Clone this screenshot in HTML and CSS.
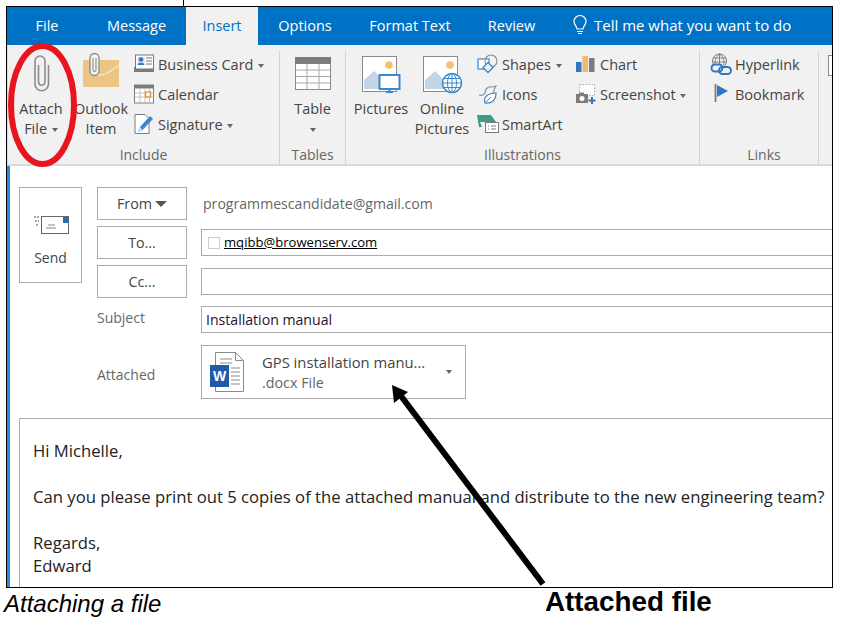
FILE: index.html
```html
<!DOCTYPE html>
<html lang="en">
<head>
<meta charset="utf-8">
<title>Attaching a file</title>
<link rel="stylesheet" href="styles.css">
</head>
<body>
<div class="page">
  <div class="tick"></div>
  <div class="frame">
    <nav class="tabs">
      <div class="tab t-file">File</div>
      <div class="tab t-message">Message</div>
      <div class="tab active">Insert</div>
      <div class="tab t-options">Options</div>
      <div class="tab t-format">Format Text</div>
      <div class="tab t-review">Review</div>
      <div class="tell">
        <svg class="bulb" width="16" height="20" viewBox="0 0 16 20"><path d="M5 14c0-3-3-4-3-7.500a6 6 0 0 1 12 0C14 10 11 11 11 14z" fill="none" stroke="#fff" stroke-width="1.200"/><path d="M5 16.500h6M6 18.500h4" stroke="#fff" stroke-width="1.200"/></svg>
        <span>Tell me what you want to do</span>
      </div>
    </nav>
    <section class="ribbon">
      <div class="group g-include">
        <div class="items">
          <div class="large w-attach">
            <svg class="licon" width="40" height="42" viewBox="0 0 40 42"><path d="M27.500 12V31a6.750 6.750 0 0 1-13.500 0V8a5 5 0 0 1 10 0V29a3.250 3.250 0 0 1-6.500 0V12" fill="none" stroke="#8c8c8c" stroke-width="1.600"/></svg>
            <span>Attach</span><span>File <i class="caret"></i></span>
          </div>
          <div class="large w-outlook">
            <svg class="licon" width="40" height="42" viewBox="0 0 40 42"><path d="M2 7h36v27H2z" fill="#ecc583"/><path d="M15 22c8 2 17-5 23-10" fill="none" stroke="#f7e7c8" stroke-width="1.400"/><path d="M9 5a4.500 4.500 0 0 1 9 0v13a4.500 4.500 0 0 1-9 0z" fill="#f4f4f4" stroke="#8c8c8c" stroke-width="1.300"/><path d="M12 5v12a1.500 1.500 0 0 0 3 0V5" fill="none" stroke="#8c8c8c" stroke-width="1.100"/></svg>
            <span>Outlook</span><span>Item</span>
          </div>
          <div class="smalls">
            <div class="small">
              <svg width="22" height="20" viewBox="0 0 22 20"><rect x="1" y="13" width="20" height="5" fill="#7c7c7c"/><rect x="2.500" y="1" width="18" height="14" fill="#fff" stroke="#777"/><rect x="4.500" y="3" width="7" height="8" fill="#cfe0f2"/><circle cx="8" cy="5.500" r="2.200" fill="#2f78c4"/><path d="M4.500 11c.5-3 6.500-3 7 0z" fill="#2f78c4"/><path d="M13 4h6M13 7h6M13 10h6" stroke="#777"/></svg>
              <span>Business Card <i class="caret"></i></span>
            </div>
            <div class="small">
              <svg width="22" height="20" viewBox="0 0 22 20"><rect x="1.500" y="1" width="19" height="18" fill="#fff" stroke="#7c7c7c"/><rect x="1.500" y="1" width="19" height="3.500" fill="#7c7c7c"/><path d="M2 9h19M2 13h19M7 5v14M12 5v14M16.500 5v14" stroke="#b5b5b5" stroke-width=".8"/><rect x="12.500" y="8" width="5" height="5" fill="#fff" stroke="#e58a2c" stroke-width="1.300"/></svg>
              <span>Calendar</span>
            </div>
            <div class="small">
              <svg width="22" height="22" viewBox="0 0 22 22"><path d="M2 1.500h10l4 4V20.500H2z" fill="#fff" stroke="#7c7c7c"/><path d="M5 19l2-5L17 3l3 3L9.500 17z" fill="#3b86cf"/><path d="M5 19l2-5 2.500 3z" fill="#c9ddf1"/></svg>
              <span>Signature <i class="caret"></i></span>
            </div>
          </div>
        </div>
        <div class="label">Include</div>
      </div>
      <div class="group g-tables">
        <div class="items">
          <div class="large w-table">
            <svg class="licon" width="38" height="42" viewBox="0 0 38 42"><rect x="1.500" y="4.500" width="35" height="32" fill="#fff" stroke="#8a8a8a"/><rect x="1" y="4" width="36" height="7" fill="#7c7c7c"/><path d="M2 17h34M2 23.500h34M2 30h34M13 11v25M25 11v25" stroke="#a8a8a8"/></svg>
            <span>Table</span><span><i class="caret"></i></span>
          </div>
        </div>
        <div class="label">Tables</div>
      </div>
      <div class="group g-illus">
        <div class="items">
          <div class="large w-pic">
            <svg class="licon" width="44" height="42" viewBox="0 0 44 42"><rect x="3.500" y="3.500" width="34" height="35" fill="#fff" stroke="#8a8a8a"/><circle cx="30" cy="12" r="3.800" fill="#f0c36d"/><path d="M5 36V27l10-9 12 12v6z" fill="#c2d4e8"/><rect x="20.500" y="22" width="20" height="14" fill="#fff" stroke="#3c86cc" stroke-width="2"/><path d="M27 39h7M30.500 36v3" stroke="#3c86cc" stroke-width="2"/></svg>
            <span>Pictures</span>
          </div>
          <div class="large w-online">
            <svg class="licon" width="44" height="42" viewBox="0 0 44 42"><rect x="3.500" y="3.500" width="34" height="35" fill="#fff" stroke="#8a8a8a"/><circle cx="30" cy="12" r="3.800" fill="#f0c36d"/><path d="M5 36V27l10-9 12 12v6z" fill="#c2d4e8"/><circle cx="32" cy="30" r="9.500" fill="#fff" stroke="#3c86cc" stroke-width="1.500"/><path d="M22.500 30h19M23.500 25.500h17M23.500 34.500h17M32 20.500v19" stroke="#3c86cc"/><ellipse cx="32" cy="30" rx="4.500" ry="9.500" fill="none" stroke="#3c86cc"/></svg>
            <span>Online</span><span>Pictures</span>
          </div>
          <div class="smalls s-draw">
            <div class="small">
              <svg width="22" height="20" viewBox="0 0 22 20"><rect x="1" y="5" width="11" height="10" fill="#fff" stroke="#3c86cc" stroke-width="1.200"/><circle cx="14" cy="7" r="6" fill="none" stroke="#8c8c8c" stroke-width="1.100"/><path d="M11 9.500l5 5-5 5-5-5z" transform="translate(0 -1)" fill="#f1f1f1" stroke="#3c86cc" stroke-width="1.300"/></svg>
              <span>Shapes <i class="caret"></i></span>
            </div>
            <div class="small">
              <svg width="22" height="22" viewBox="0 0 22 22"><path d="M2 12c3 1 5 0 6-2 0-5 4-7 8-6l3-1-2 4c0 3-2 5-4 6" fill="none" stroke="#8c8c8c" stroke-width="1.100"/><path d="M8 20c-2-6 3-10 11-10 0 7-4 11-11 10z" fill="#fff" stroke="#3c86cc" stroke-width="1.200"/><path d="M8 20l6-6" stroke="#3c86cc"/></svg>
              <span>Icons</span>
            </div>
            <div class="small">
              <svg width="22" height="22" viewBox="0 0 22 22"><path d="M0 2h14l5 7H3l2 5H2z" fill="#3f9a83"/><rect x="8.500" y="9.500" width="13" height="10" fill="#fff" stroke="#7c7c7c"/><path d="M11 13h1M14 13h5M11 16h1M14 16h5" stroke="#7c7c7c"/></svg>
              <span>SmartArt</span>
            </div>
          </div>
          <div class="smalls s-chart">
            <div class="small">
              <svg width="22" height="20" viewBox="0 0 22 20"><rect x="1" y="8" width="5.500" height="10" fill="#2f78c4"/><rect x="7.500" y="2" width="5.500" height="16" fill="#eebd6b"/><rect x="14" y="4" width="5.500" height="14" fill="#7c7c7c"/></svg>
              <span>Chart</span>
            </div>
            <div class="small">
              <svg width="22" height="22" viewBox="0 0 22 22"><rect x="4.500" y="1.500" width="15" height="11" fill="#fff" stroke="#aaa" stroke-dasharray="1.500 1.500"/><rect x="1" y="11" width="12" height="9" fill="#7c7c7c"/><rect x="4" y="9.500" width="5" height="2" fill="#7c7c7c"/><circle cx="7" cy="15.500" r="2.500" fill="#fff"/><path d="M17 14v7M13.500 17.500h7" stroke="#2f78c4" stroke-width="2"/></svg>
              <span>Screenshot <i class="caret"></i></span>
            </div>
          </div>
        </div>
        <div class="label">Illustrations</div>
      </div>
      <div class="group g-links">
        <div class="items">
          <div class="smalls">
            <div class="small">
              <svg width="22" height="22" viewBox="0 0 22 22"><circle cx="9.500" cy="8" r="7" fill="none" stroke="#7c7c7c"/><path d="M3 5h13M2.500 9h14M9.500 1v12M5.500 12c-1-4 0-8 4-11 4 3 5 7 4 11" fill="none" stroke="#7c7c7c" stroke-width=".9"/><rect x="1.500" y="11.500" width="11" height="7" rx="3.500" fill="#f1f1f1" stroke="#2f78c4" stroke-width="2"/><rect x="9" y="14" width="12" height="7" rx="3.500" fill="none" stroke="#2f78c4" stroke-width="2"/></svg>
              <span>Hyperlink</span>
            </div>
            <div class="small">
              <svg width="22" height="20" viewBox="0 0 22 20"><path d="M5.500 0v18" stroke="#7c7c7c" stroke-width="1.800"/><path d="M7 1l11 6-11 6z" fill="#2f78c4"/></svg>
              <span>Bookmark</span>
            </div>
          </div>
        </div>
        <div class="label">Links</div>
      </div>
      <div class="group g-more"><div class="peek"></div></div>
    </section>
    <section class="compose">
      <div class="head">
        <button class="send" type="button">
          <svg width="36" height="22" viewBox="0 0 36 22"><rect x="8.500" y="2.500" width="27" height="17" fill="#fff" stroke="#666"/><rect x="30" y="3" width="5" height="6" fill="#1f6fbf"/><path d="M13 14h10M15 11h7" stroke="#888"/><path d="M1 3h5M2 7h4M3 11h3" stroke="#555" stroke-dasharray="2 1"/></svg>
          <span>Send</span>
        </button>
        <div class="fields">
          <div class="row r-from">
            <div class="btn">From <i class="caret big"></i></div>
            <div class="from-addr">programmescandidate@gmail.com</div>
          </div>
          <div class="row r-to">
            <div class="btn">To...</div>
            <div class="field"><i class="check"></i><span class="addr">mqibb@browenserv.com</span></div>
          </div>
          <div class="row r-cc">
            <div class="btn">Cc...</div>
            <div class="field"></div>
          </div>
          <div class="row r-subject">
            <div class="cap">Subject</div>
            <div class="field subject">Installation manual</div>
          </div>
          <div class="row r-attached">
            <div class="cap">Attached</div>
            <div class="attach">
              <svg width="38" height="42" viewBox="0 0 38 42"><path d="M6.500 1.500h20l8 8v31h-28z" fill="#fff" stroke="#8a8a8a"/><path d="M26.500 1.500v8h8" fill="none" stroke="#8a8a8a"/><path d="M11 8h12M11 12h12M22 17h9M22 21h9M22 25h9M22 29h9M22 33h9" stroke="#8a8a8a"/><rect x="1" y="14" width="19" height="22" fill="#1e5ba8"/><text x="10.500" y="30" class="w">W</text></svg>
              <div class="attach-text"><div>GPS installation manu...</div><div class="sub">.docx File</div></div>
              <i class="caret"></i>
            </div>
          </div>
        </div>
      </div>
      <div class="body">
        <p>Hi Michelle,</p>
        <p>Can you please print out 5 copies of the attached manual and distribute to the new engineering team?</p>
        <p>Regards,<br>Edward</p>
      </div>
    </section>
  </div>
  <div class="captions">
    <div class="cap-left">Attaching a file</div>
    <div class="cap-right">Attached file</div>
  </div>
  <svg class="marks" width="842" height="632" viewBox="0 0 842 632">
    <ellipse cx="42.500" cy="105" rx="31.500" ry="59" fill="none" stroke="#e8141f" stroke-width="6"/>
    <path d="M543 584L401 396" stroke="#000" stroke-width="6" fill="none"/>
    <path d="M392 385l16 7-14 11z" fill="#000"/>
  </svg>
</div>
</body>
</html>
```
FILE: styles.css
```css
* { box-sizing: border-box; }
html, body { margin: 0; padding: 0; background: #fff; }
.page { position: relative; width: 842px; height: 632px; padding: 6px 0 0 6px; overflow: hidden; font-family: "Open Sans", "Noto Sans", sans-serif; color: #444; }
.tick { position: absolute; left: 183px; top: 0; width: 1px; height: 6px; background: #000; }
.frame { width: 827px; height: 582px; border: 1px solid #000; background: #fff; overflow: hidden; }

.tabs { display: grid; grid-template-columns: 80px 99px 72px 94px 116px 87px 1fr; height: 38px; background: #0072c6; color: #fff; font-size: 14.500px; }
.tab { display: flex; align-items: center; justify-content: center; padding-bottom: 1px; }
.tab.active { background: #f1f1f1; color: #0072c6; }
.tell { display: flex; align-items: center; gap: 6px; padding-left: 17px; padding-bottom: 2px; white-space: nowrap; font-size: 15px; }

.ribbon { display: flex; height: 121px; background: #f1f1f1; border-bottom: 2px solid #d9d9d9; font-size: 14.500px; border-left: 1px solid #dcdcdc; }
.group { flex: none; display: flex; flex-direction: column; margin: 6px 0 0; border-right: 1px solid #d2d2d2; }
.items { flex: 1; display: flex; min-height: 0; }
.g-include { width: 272px; }
.g-tables { width: 66px; }
.g-illus { width: 354px; }
.g-links { width: 119px; padding-left: 10px; }
.g-more { flex: 1; min-width: 0; border-right: 0; padding: 4px 0 0 9px; }
.peek { width: 8px; height: 21px; border: 1px solid #888; border-right: 0; background: #fff; }
.label { height: 19px; text-align: center; font-size: 14px; line-height: 20px; color: #666; }

.large { display: flex; flex-direction: column; align-items: center; line-height: 20px; white-space: nowrap; }
.licon { height: 42px; margin: 2px 0 4px; }
.w-attach { width: 54px; margin-left: 6px; }
.w-outlook { width: 60px; margin-left: 3px; }
.w-table { width: 66px; }
.w-pic { width: 60px; margin-left: 5px; }
.w-online { width: 60px; margin-left: 1px; }

.smalls { display: flex; flex-direction: column; margin-top: -2px; }
.g-include .smalls { margin-left: 2px; }
.s-draw { width: 98px; margin-left: 5px; }
.small { flex: none; display: flex; align-items: center; gap: 3px; height: 30px; white-space: nowrap; }
.small svg { flex: none; width: 22px; }

.caret { display: inline-block; width: 0; height: 0; border: 3.500px solid transparent; border-top: 4px solid #666; border-bottom: 0; vertical-align: middle; margin-left: 1px; }
.caret.big { border-width: 6px 6.500px 0; border-top-color: #555; }

.compose { display: flex; flex-direction: column; height: 421px; border-left: 3px solid #2b88d8; padding: 21px 0 0 9px; font-size: 14px; }
.head { display: flex; align-items: flex-start; }
.send { display: flex; flex-direction: column; align-items: center; width: 63px; height: 96px; padding: 26px 0 0; background: #fff; border: 1px solid #ababab; font: inherit; color: #444; gap: 12px; }
.fields { display: flex; flex-direction: column; flex: 1; margin-left: 15px; }
.row { display: flex; align-items: center; }
.btn { flex: none; width: 90px; height: 33px; display: flex; align-items: center; justify-content: center; gap: 2px; border: 1px solid #ababab; font-size: 14.300px; }
.cap { flex: none; width: 90px; color: #666; font-size: 14px; }
.r-subject .cap { margin-top: -4px; }
.r-attached .cap { margin-top: 4px; }
.from-addr { margin-left: 16px; color: #666; font-size: 14.100px; }
.field { flex: 1; margin: 0 -8px 0 14px; height: 27px; border: 1px solid #ababab; display: flex; align-items: center; padding-left: 4px; font-size: 14.100px; color: #222; }
.r-to, .r-cc { margin-top: 6px; }
.r-subject { margin-top: 8px; height: 27px; }
.r-attached { margin-top: 12px; }
.check { width: 12px; height: 12px; margin: 0 4px 0 2px; border: 1px solid #ccc; }
.addr { color: #000; text-decoration: underline; font-size: 13.100px; line-height: 14px; padding-bottom: 2px; }
.subject { color: #2a1030; }
.attach { display: flex; align-items: center; width: 265px; height: 54px; margin-left: 14px; border: 1px solid #ababab; padding-left: 7px; font-size: 14.800px; }
.attach-text { margin-left: 15px; width: 186px; line-height: 20px; white-space: nowrap; }
.attach .caret { margin-left: -2px; }
.sub { color: #666; font-size: 14.300px; padding-top: 1px; }
.w { font: bold 14px "Liberation Sans", sans-serif; fill: #fff; text-anchor: middle; }

.body { flex: 1; margin: 19px -8px 0 0; border: 1px solid #ababab; border-bottom: 0; padding: 20px 0 0 13px; font-size: 16.680px; line-height: 23px; color: #222; white-space: nowrap; overflow: hidden; }
.body p { margin: 0 0 23px; }

.captions { display: flex; font-family: "Liberation Sans", sans-serif; color: #000; }
.cap-left { width: 541px; margin-left: -2px; padding-top: 2px; font-style: italic; font-size: 24px; }
.cap-right { font-weight: bold; font-size: 27.800px; margin-top: -2px; }
.marks { position: absolute; left: 0; top: 0; pointer-events: none; }
```
